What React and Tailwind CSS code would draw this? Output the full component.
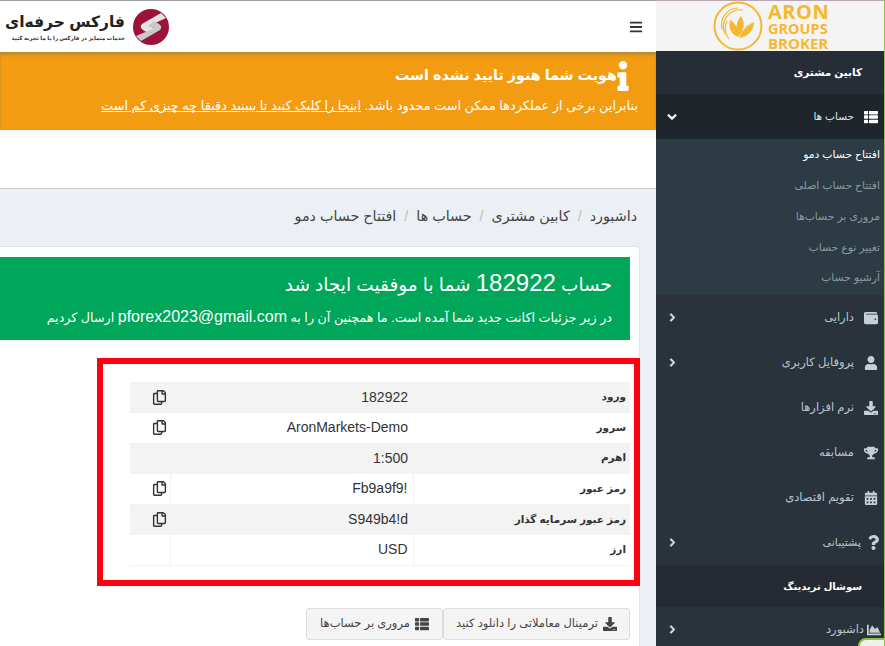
import {
  FaBars,
  FaCalendarAlt,
  FaChartArea,
  FaChevronDown,
  FaChevronRight,
  FaDownload,
  FaInfo,
  FaQuestion,
  FaRegCopy,
  FaThList,
  FaTrophy,
  FaUser,
  FaWallet,
} from 'react-icons/fa';

const subItems = [
  { name: 'افتتاح حساب دمو', active: true },
  { name: 'افتتاح حساب اصلی' },
  { name: 'مروری بر حساب‌ها' },
  { name: 'تغییر نوع حساب' },
  { name: 'آرشیو حساب' },
];

const menuItems = [
  { name: 'دارایی', icon: FaWallet, arrow: true },
  { name: 'پروفایل کاربری', icon: FaUser, arrow: true },
  { name: 'نرم افزارها', icon: FaDownload },
  { name: 'مسابقه', icon: FaTrophy },
  { name: 'تقویم اقتصادی', icon: FaCalendarAlt },
];

const rows = [
  { label: 'ورود', value: '182922', copy: true },
  { label: 'سرور', value: 'AronMarkets-Demo', copy: true },
  { label: 'اهرم', value: '1:500' },
  { label: 'رمز عبور', value: 'Fb9a9f9!', copy: true, lined: true },
  { label: 'رمز عبور سرمایه گذار', value: 'S949b4!d', copy: true },
  { label: 'ارز', value: 'USD', lined: true },
];

const SiteLogo = () => (
  <div className="flex items-center gap-[7px]">
    <svg width="38" height="36" viewBox="0 0 38 36">
      <circle cx="19" cy="18" r="18" fill="#9c1238" />
      <path d="M29 4 L10 15 Q7 18 11 21 L19 26 L25 20 L17 17 L34 9 Z" fill="#e3e3e3" />
      <path d="M9 32 L28 21 Q31 18 27 15 L22 12 L16 17 L23 19 L4 27 Z" fill="#c9c9c9" />
    </svg>
    <div className="flex flex-col items-start w-[118px]">
      <span className="text-[15.5px] leading-[24px] font-bold text-[#222] whitespace-nowrap">فارکس حرفه‌ای</span>
      <span className="text-[5.5px] leading-[9px] font-bold text-[#333] whitespace-nowrap">خدمات متمایز در فارکس را با ما تجربه کنید</span>
    </div>
  </div>
);

const BrokerLogo = () => (
  <div dir="ltr" className="h-[51px] bg-[#f4f4f4] border-t border-[#b9a6b4] flex items-center pl-[57px] gap-[5px]">
    <svg width="50" height="50" viewBox="0 0 50 50" fill="none">
      <circle cx="25" cy="25" r="23.5" stroke="#f5b82e" strokeWidth="2" />
      <path d="M12 33 A17 17 0 0 1 30 9" stroke="#f5b82e" strokeWidth="1.2" />
      <path d="M9 28 A17 17 0 0 1 25 7" stroke="#f5b82e" strokeWidth="1.2" />
      <path d="M16 38 A18 18 0 0 1 14 20" stroke="#f5b82e" strokeWidth="1.2" />
      <path d="M25 36 C18 33 15 27 17 19 C22 22 26 28 25 36 Z" fill="#f5b82e" />
      <path d="M25 36 C22 28 23 21 28 15 C32 21 32 29 25 36 Z" fill="#f5b82e" />
      <path d="M26 37 C29 29 34 24 41 21 C41 29 35 36 26 37 Z" fill="#f5b82e" />
    </svg>
    <div className="flex flex-col font-['Open_Sans',sans-serif] font-bold text-[#f5b82e] leading-none">
      <span className="text-[20px] leading-[19px] tracking-[0.5px]">ARON</span>
      <span className="text-[14.5px] leading-[15px]">GROUPS</span>
      <span className="text-[15px] leading-[15px]">BROKER</span>
    </div>
  </div>
);

const Arrow = () => <FaChevronRight stroke="currentColor" strokeWidth="40" className="text-[9px] text-[#dfe5e8]" />;

const Sidebar = () => (
  <aside className="w-[229px] h-[646px] shrink-0 bg-[#2a323c] border-r border-[#8bc34a] relative overflow-hidden">
    <BrokerLogo />
    <div className="h-[43px] flex items-center pr-[22px] text-[10.5px] font-bold text-white bg-[#262d37]">کابین مشتری</div>
    <div className="h-[45px] flex items-center justify-between bg-[#1e262c] pr-[6px] pl-[11px] text-[#dfe5e8]">
      <div className="flex items-center gap-[10px]">
        <FaThList className="text-[14px] text-white" />
        <span className="text-[10.5px]">حساب ها</span>
      </div>
      <FaChevronDown stroke="currentColor" strokeWidth="40" className="text-[10px] text-white" />
    </div>
    <ul className="h-[156px] bg-[#2d3b44]">
      {subItems.map((item) => (
        <li
          key={item.name}
          className={`h-[30.8px] flex items-center pr-[4px] text-[10.8px] ${item.active ? 'text-white' : 'text-[#8a9aa3]'}`}
        >
          {item.name}
        </li>
      ))}
    </ul>
    <ul>
      {menuItems.map((item) => (
        <li key={item.name} className="h-[45px] flex items-center justify-between pr-[5px] pl-[12px] text-[#b8c7ce]">
          <div className="flex items-center">
            <span className="w-[16px] flex justify-center">
              <item.icon className="text-[14px] text-[#c4d0d6]" />
            </span>
            <span className="text-[11.5px] mr-[9px]">{item.name}</span>
          </div>
          {item.arrow && <Arrow />}
        </li>
      ))}
      <li className="h-[45px] flex items-center justify-between pr-[3px] pl-[12px] text-[#b8c7ce]">
        <div className="flex items-center gap-[5px]">
          <FaQuestion className="text-[15px] text-[#c4d0d6]" />
          <span className="text-[11px]">پشتیبانی</span>
        </div>
        <Arrow />
      </li>
    </ul>
    <div className="h-[42px] flex items-center pr-[22px] text-[10px] font-bold text-white bg-[#262b33]">سوشال تریدینگ</div>
    <div className="h-[45px] flex items-center justify-between pr-[3px] pl-[12px] text-[#b8c7ce]">
      <div className="flex items-center gap-[3px]">
        <FaChartArea className="text-[14px] text-[#c4d0d6]" />
        <span className="text-[11.5px]">داشبورد</span>
      </div>
      <Arrow />
    </div>
    <div className="absolute left-[202px] top-[638px] w-[32px] h-[20px] bg-[#eef2ee] border-2 border-[#8bc34a] rounded-tl-lg" />
  </aside>
);

const AccountTable = () => (
  <table className="w-[500px] table-fixed border-collapse text-[14px] text-[#333]">
    <tbody>
      {rows.map((row, i) => (
        <tr key={row.label} className={`h-[30.5px] ${i % 2 === 0 ? 'bg-[#f3f3f3]' : 'bg-white'} ${row.lined ? 'border-b border-[#f2f2f2]' : ''}`}>
          <td className={`w-[217px] pr-[4px] text-[10.5px] font-bold whitespace-nowrap ${row.lined ? 'border-l border-[#f2f2f2]' : ''}`}>{row.label}</td>
          <td dir="ltr" className={`text-right pr-[5px] font-['Liberation_Sans',sans-serif] ${row.lined ? 'border-l border-[#f2f2f2]' : ''}`}>{row.value}</td>
          <td className="w-[40px] text-[#333]">
            {row.copy && (
              <div className="flex justify-end pl-[22px]">
                <FaRegCopy className="text-[15px]" />
              </div>
            )}
          </td>
        </tr>
      ))}
    </tbody>
  </table>
);

export default function App() {
  return (
    <div dir="rtl" className="w-[885px] h-[646px] flex overflow-hidden bg-white font-['Liberation_Sans','DejaVu_Sans',sans-serif]">
      <Sidebar />
      <main className="w-[656px] h-[646px] overflow-hidden bg-[#ecf0f5]">
        <header className="h-[52px] bg-white border-t border-[#a0a0a0] flex items-center justify-between pr-[13px] pl-[7px]">
          <FaBars className="text-[14px] text-[#333]" />
          <SiteLogo />
        </header>
        <section className="h-[78px] bg-[#f39c12] text-white pr-[18px] shadow-[inset_0_3px_3px_rgba(120,120,80,0.45)]">
          <div className="flex items-center h-[43px] pt-[4px]">
            <FaInfo className="text-[30px] ml-[-9px]" />
            <span className="text-[14.3px] font-bold whitespace-nowrap">هویت شما هنوز تایید نشده است</span>
          </div>
          <p className="text-[12.85px] mt-[1px] whitespace-nowrap">
            بنابراین برخی از عملکردها ممکن است محدود باشد.{' '}
            <a className="underline">اینجا را کلیک کنید تا ببینید دقیقا چه چیزی کم است</a>
          </p>
        </section>
        <div className="h-[59px] bg-white border-b border-[#c8ccd0]" />
        <nav className="h-[57px] flex items-center gap-[8px] pr-[19px] pb-[1px] text-[14.3px] text-[#444]">
          <span>داشبورد</span>
          <span className="text-[#bbb]">/</span>
          <span>کابین مشتری</span>
          <span className="text-[#bbb]">/</span>
          <span>حساب ها</span>
          <span className="text-[#bbb]">/</span>
          <span>افتتاح حساب دمو</span>
        </nav>
        <div className="mr-[16px] h-[400px] bg-white border-t border-r border-[#e0e4e8] rounded-tr-[3px] pt-[10px]">
          <div className="mr-[9px] h-[83px] bg-[#00a65a] text-white pr-[18px] pt-[13px]">
            <h2 className="text-[18.5px] leading-[26px] whitespace-nowrap">
              حساب <span className="text-[24px]">182922</span> شما با موفقیت ایجاد شد
            </h2>
            <p className="text-[12.7px] leading-[18px] mt-[10px] whitespace-nowrap">
              در زیر جزئیات اکانت جدید شما آمده است. ما همچنین آن را به <span className="text-[16px]">pforex2023@gmail.com</span> ارسال کردیم
            </p>
          </div>
          <div className="ml-[97px] mr-[-1px] mt-[18px] h-[228px] border-[6px] border-[#ff0013] pr-[4px] pt-[18px]">
            <AccountTable />
          </div>
          <div className="flex mr-[9px] mt-[22px] text-[11.5px] text-[#444]">
            <button type="button" className="h-[32px] w-[187px] flex items-center justify-center gap-[5px] bg-[#f4f4f4] border border-[#ddd] rounded-[3px]">
              <FaDownload className="text-[14px]" />
              <span className="whitespace-nowrap">ترمینال معاملاتی را دانلود کنید</span>
            </button>
            <button type="button" className="h-[32px] w-[137px] flex items-center justify-center gap-[5px] bg-[#f4f4f4] border border-[#ddd] rounded-[3px]">
              <FaThList className="text-[14px]" />
              <span className="whitespace-nowrap">مروری بر حساب‌ها</span>
            </button>
          </div>
        </div>
      </main>
    </div>
  );
}
